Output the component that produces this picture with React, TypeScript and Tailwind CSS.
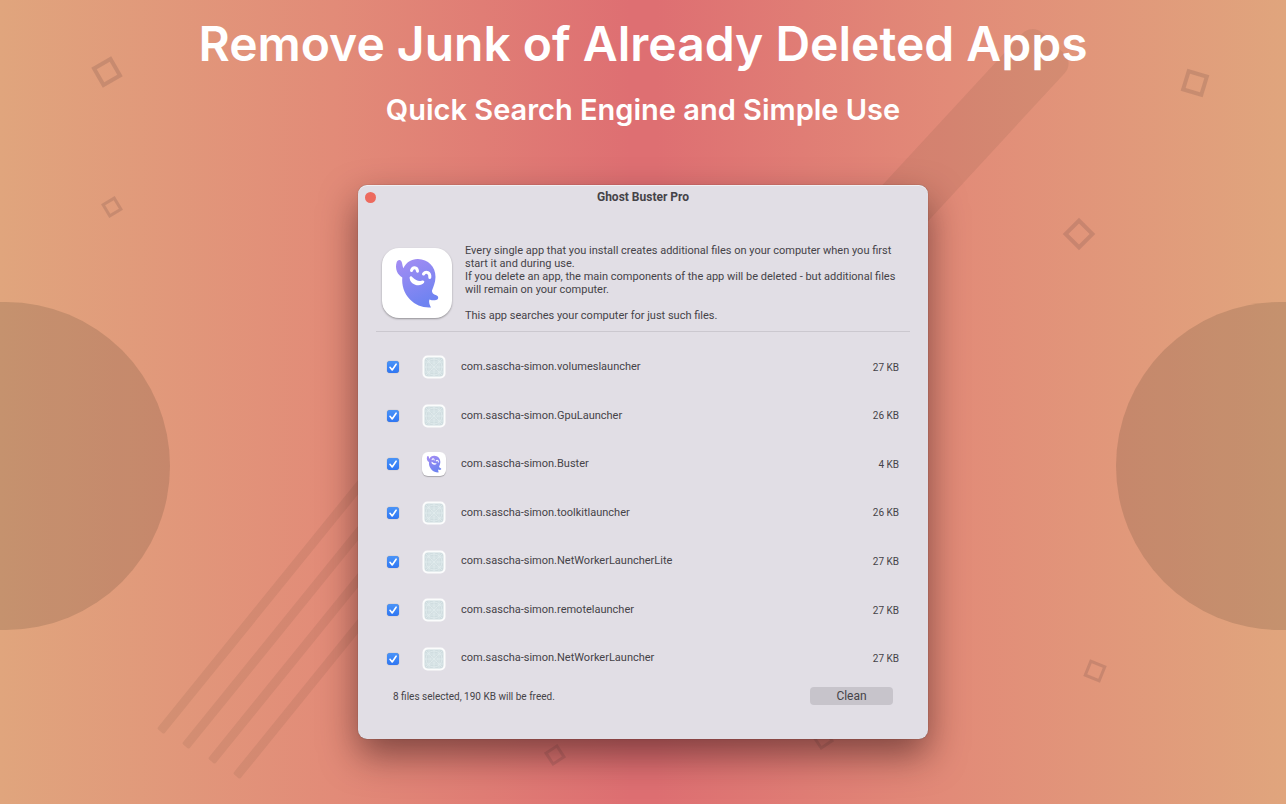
import { useState } from "react";

type Item = { name: string; size: string; ghost?: boolean };

const items: Item[] = [
  { name: "com.sascha-simon.volumeslauncher", size: "27 KB" },
  { name: "com.sascha-simon.GpuLauncher", size: "26 KB" },
  { name: "com.sascha-simon.Buster", size: "4 KB", ghost: true },
  { name: "com.sascha-simon.toolkitlauncher", size: "26 KB" },
  { name: "com.sascha-simon.NetWorkerLauncherLite", size: "27 KB" },
  { name: "com.sascha-simon.remotelauncher", size: "27 KB" },
  { name: "com.sascha-simon.NetWorkerLauncher", size: "27 KB" },
];

const squares = [
  { x: 107, y: 72, side: 19, angle: -30, stroke: 4 },
  { x: 112, y: 207, side: 13, angle: -31, stroke: 3 },
  { x: 1195, y: 83, side: 19, angle: 17, stroke: 4 },
  { x: 1079, y: 234, side: 19, angle: 45, stroke: 4 },
  { x: 1095, y: 671, side: 15, angle: 22, stroke: 3 },
  { x: 555, y: 755, side: 13, angle: -33, stroke: 3 },
  { x: 823, y: 739, side: 13, angle: -34, stroke: 3 },
];

const stripes = [
  { x: 160, y: 731 },
  { x: 185, y: 746 },
  { x: 211, y: 761 },
  { x: 236, y: 776 },
];

function Backdrop() {
  return (
    <svg
      aria-hidden="true"
      className="absolute inset-0 h-full w-full"
      viewBox="0 0 1286 804"
      preserveAspectRatio="xMidYMid slice"
    >
      <g fill="#5a4630" fillOpacity="0.2">
        <circle cx="6" cy="466" r="164" />
        <circle cx="1280" cy="466" r="164" />
      </g>
      <rect
        x="-29"
        width="58"
        height="280"
        rx="14"
        fill="#5a4630"
        fillOpacity="0.1"
        transform="translate(1053 43) rotate(42.7)"
      />
      <g fill="#5a4630" fillOpacity="0.1">
        {stripes.map((s) => (
          <rect
            key={s.x}
            x="-4"
            y="-500"
            width="9"
            height="500"
            rx="2"
            transform={`translate(${s.x} ${s.y}) rotate(39)`}
          />
        ))}
      </g>
      <g fill="none" stroke="#5a3c3c" strokeOpacity="0.18">
        {squares.map((s) => (
          <rect
            key={s.x}
            x={-s.side / 2}
            y={-s.side / 2}
            width={s.side}
            height={s.side}
            strokeWidth={s.stroke}
            transform={`translate(${s.x} ${s.y}) rotate(${s.angle})`}
          />
        ))}
      </g>
    </svg>
  );
}

function Ghost({ id, className }: { id: string; className: string }) {
  return (
    <svg aria-hidden="true" className={className} viewBox="0 0 70 70">
      <defs>
        <linearGradient id={id} x1="0" y1="0" x2="0.4" y2="1">
          <stop offset="0" stopColor="#a68df3" />
          <stop offset="1" stopColor="#6f83f1" />
        </linearGradient>
      </defs>
      <path
        fill={`url(#${id})`}
        d="M14.6 14.4C15.2 12 17.8 11 19.2 13C20.4 14.8 20.2 17.4 21.4 20.2C24 14.4 29.6 10.8 36 11C46 11.300 53.600 18.500 53.500 29C53.400 34.500 51.500 38.600 50 42.500C49.600 44.700 51.600 46.500 54.200 47.200C57 48 56.800 51.500 54 52.100C51.800 52.700 49.600 52.200 47.400 51.400C46.600 54 47.600 57 49 59.400C41 60 33.500 57.200 28 51.500C21.800 45.200 19.600 37 20.300 29.500C15.300 26.400 12.800 20.800 14.600 14.400Z"
      />
      <g fill="none" stroke="#fff" strokeWidth="3" strokeLinecap="round">
        <path d="M29.500 22.500C30.600 18.600 35 18.800 35.500 23.200" />
        <path d="M41.500 26C44 22.600 48.400 24.600 47.800 29.400" />
      </g>
      <path
        fill="#fff"
        d="M27.600 29.200C28.500 27.500 30 28.500 31 29.800C33.500 32.400 36.500 33.300 39.500 32.700C41.600 32.200 43 33 42 34.800C38.500 39.500 27.400 37.200 27.600 29.200Z"
      />
    </svg>
  );
}

function GridIcon() {
  return (
    <svg aria-hidden="true" className="size-6" viewBox="0 0 24 24">
      <rect x="0.500" y="0.500" width="23" height="23" rx="5" fill="#fbfcfc" />
      <rect x="2.500" y="2.500" width="19" height="19" rx="3.500" fill="#d0dde0" />
      <g stroke="#e3ecee" strokeWidth="0.7" fill="none">
        <path d="M7 2.500V21.500M12 2.500V21.500M17 2.500V21.500M2.500 7H21.500M2.500 12H21.500M2.500 17H21.500M3.500 3.500L20.500 20.500M20.500 3.500L3.500 20.500" />
        <circle cx="12" cy="12" r="3.500" />
        <circle cx="12" cy="12" r="8" />
      </g>
    </svg>
  );
}

function Row({ item, index }: { item: Item; index: number }) {
  const [checked, setChecked] = useState(true);
  const id = `file-${index}`;
  return (
    <tr>
      <td className="w-[35px] p-0">
        <span className="relative flex size-3">
          <input
            id={id}
            type="checkbox"
            checked={checked}
            onChange={() => setChecked(!checked)}
            className="peer size-3 appearance-none rounded-[3px] bg-white shadow-[0_0_1px_rgba(0,0,0,0.4)] checked:bg-linear-to-b checked:from-[#4a94f8] checked:to-[#2f76f3]"
          />
          <svg
            aria-hidden="true"
            className="pointer-events-none absolute inset-0 hidden size-3 peer-checked:block"
            viewBox="0 0 12 12"
          >
            <path
              d="M3 6.300L5.200 9L9.100 3.200"
              fill="none"
              stroke="#fff"
              strokeWidth="1.600"
              strokeLinecap="round"
              strokeLinejoin="round"
            />
          </svg>
        </span>
      </td>
      <td className="w-[39px] p-0">
        {item.ghost ? (
          <span className="flex size-6 items-center justify-center rounded-md bg-white shadow-[0_1px_1px_rgba(0,0,0,0.25)]">
            <Ghost id={`ghost-${index}`} className="size-6" />
          </span>
        ) : (
          <GridIcon />
        )}
      </td>
      <td className="p-0 text-[11px]">
        <label htmlFor={id}>{item.name}</label>
      </td>
      <td className="p-0 text-right text-[10px]">{item.size}</td>
    </tr>
  );
}

export default function App() {
  return (
    <div className="relative min-h-screen overflow-hidden bg-[linear-gradient(90deg,#e0a57d_0%,#e28b78_26%,#de6f72_49%,#de6f72_51%,#e28b78_74%,#e0a57d_100%)] font-['Inter','Liberation_Sans',sans-serif]">
      <Backdrop />
      <div className="relative flex flex-col items-center pb-16">
        <header className="flex flex-col items-center pt-3 text-center text-white">
          <h1 className="text-[48px] leading-[64px] font-semibold">Remove Junk of Already Deleted Apps</h1>
          <p className="mt-3 text-[29px] leading-[44px] font-semibold">Quick Search Engine and Simple Use</p>
        </header>

        <main className="mt-[53px] flex w-[570px] max-w-full flex-col rounded-[9px] bg-[#e1dee5] pb-[34px] font-['Roboto','Liberation_Sans',sans-serif] text-[#454348] shadow-[0_0_1px_rgba(0,0,0,0.5),0_16px_36px_rgba(50,20,20,0.55),inset_0_1px_0_rgba(255,255,255,0.5)]">
          <div className="grid h-6 grid-cols-[1fr_auto_1fr] items-center px-[7px]">
            <button type="button" aria-label="Close" className="size-[11px] rounded-full bg-[#ed6a5e]" />
            <h2 className="text-[12px] font-bold">Ghost Buster Pro</h2>
          </div>

          <section className="mx-[18px] mt-[35px] flex gap-[13px] border-b border-[#cbc8cf] pb-[9px] pl-[6px]">
            <div className="mt-1 size-[70px] shrink-0 rounded-[17px] bg-white shadow-[0_1px_2px_rgba(0,0,0,0.35)]">
              <Ghost id="ghost-main" className="size-[70px]" />
            </div>
            <div className="text-[11px] leading-[13px]">
              <p>
                Every single app that you install creates additional files on your computer when you first
                start it and during use.
              </p>
              <p>
                If you delete an app, the main components of the app will be deleted - but additional files
                will remain on your computer.
              </p>
              <p className="mt-[13px]">This app searches your computer for just such files.</p>
            </div>
          </section>

          <div className="mt-[11px] pr-[29px] pl-[29px]">
            <table className="h-[340px] w-full border-collapse">
              <tbody>
                {items.map((item, index) => (
                  <Row key={item.name} item={item} index={index} />
                ))}
              </tbody>
            </table>
          </div>

          <footer className="mt-[4px] flex items-center justify-between px-[35px]">
            <p className="text-[10px]">8 files selected, 190 KB will be freed.</p>
            <button type="button" className="h-[18px] w-[83px] rounded bg-[#c7c4cb] text-[12px] leading-[18px]">
              Clean
            </button>
          </footer>
        </main>
      </div>
    </div>
  );
}
